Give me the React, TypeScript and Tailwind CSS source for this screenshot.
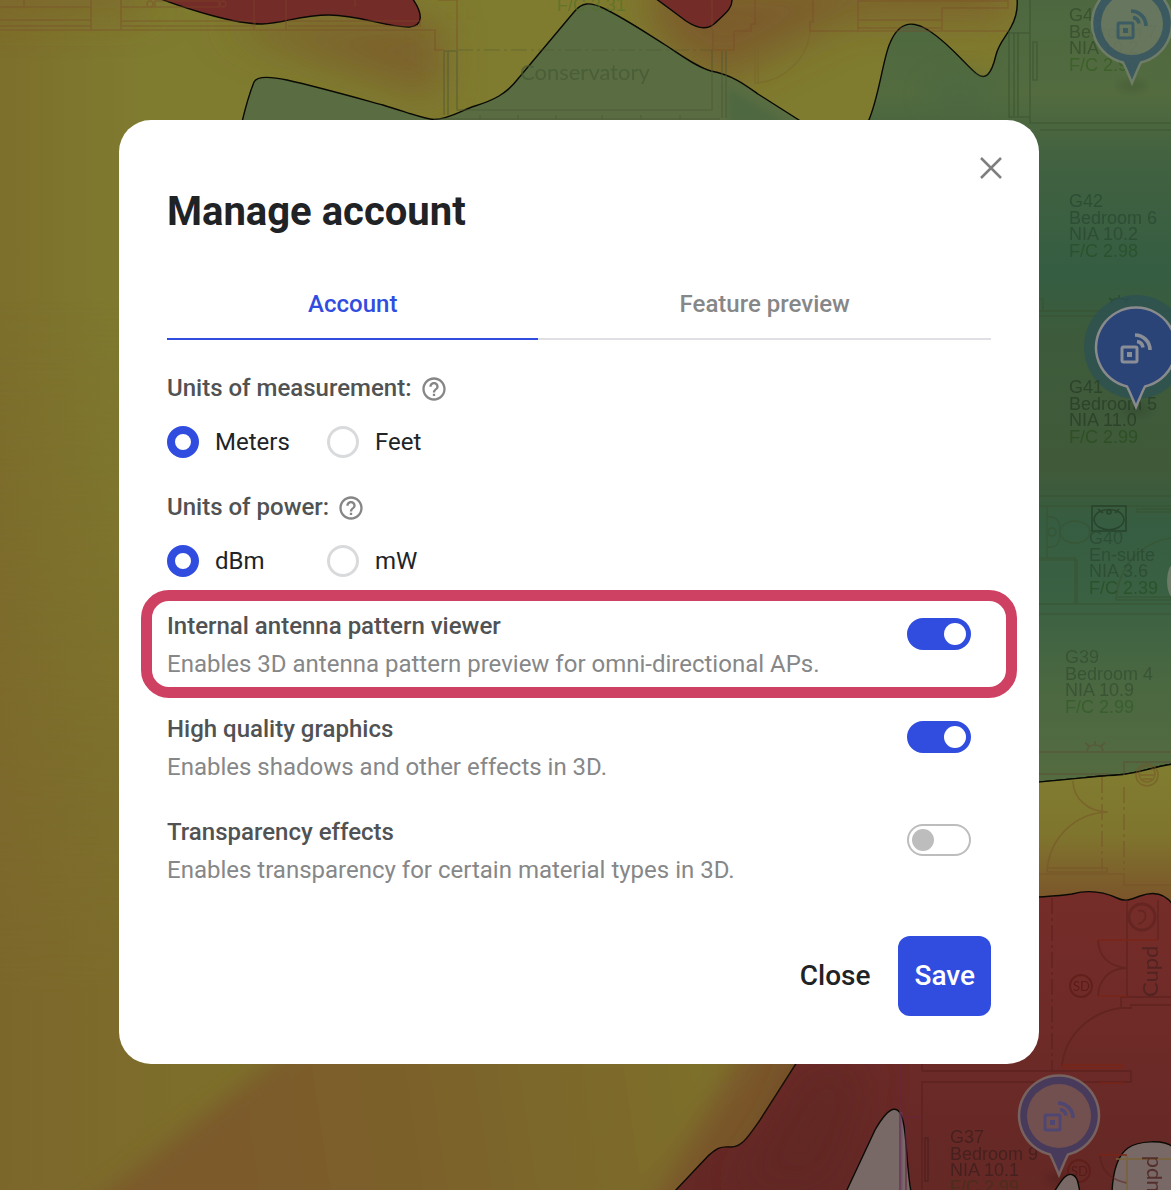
import { useState } from "react";
import { MdHelpOutline } from "react-icons/md";

type RoomProps = { x: number; y: number; lines: string[]; ink?: string; accent?: string };

function Room({ x, y, lines, ink = "#2d4d34", accent = "#2c5a2c" }: RoomProps) {
  return (
    <text x={x} y={y} fontSize="18" opacity="0.9" fontFamily="Liberation Sans, Arial, sans-serif">
      {lines.map((line, i) => (
        <tspan key={line} x={x} y={y + i * 16.6} fill={i === 3 ? accent : ink}>
          {line}
        </tspan>
      ))}
    </text>
  );
}

type PinProps = { x: number; y: number; ring: string; fill: string; edge: string; icon: string; r: number };

function Pin({ x, y, ring, fill, edge, icon, r }: PinProps) {
  return (
    <g transform={`translate(${x} ${y})`}>
      <ellipse cx="0" cy="62" rx="14" ry="5" fill="#000" opacity="0.12" filter="url(#soft)" />
      <path
        d="M-9 38.5A40 40 0 1 1 9 38.5C6 44 3 52 0 59C-3 52 -6 44 -9 38.5Z"
        fill={ring}
        stroke={edge}
        strokeWidth="2.5"
      />
      {r > 0 && <circle r={r} fill={fill} />}
      <g fill="none" stroke={icon} strokeWidth="3">
        <rect x="-14" y="-1" width="15" height="15" rx="1.5" />
        <path d="M-1 -13A15 15 0 0 1 14 2" strokeWidth="3.6" />
        <path d="M1 -6.500A7 7 0 0 1 7 -.5" strokeWidth="3.6" />
      </g>
      <rect x="-9" y="4" width="5" height="5" fill={icon} />
    </g>
  );
}

function HeatMap() {
  return (
    <svg
      className="absolute inset-0 h-full w-full"
      viewBox="0 0 1171 1190"
      preserveAspectRatio="xMidYMin slice"
      aria-hidden="true"
    >
      <defs>
        <filter id="soft" x="-50%" y="-50%" width="200%" height="200%">
          <feGaussianBlur stdDeviation="4" />
        </filter>
        <filter id="blend" x="-50%" y="-50%" width="200%" height="200%">
          <feGaussianBlur stdDeviation="11" />
        </filter>
        <filter id="haze" x="-80%" y="-80%" width="260%" height="260%">
          <feGaussianBlur stdDeviation="20" />
        </filter>
        <linearGradient id="field" x1="0" y1="0" x2="1" y2="0">
          <stop offset="0" stopColor="#7d6f2c" />
          <stop offset="0.13" stopColor="#7f7c30" />
          <stop offset="1" stopColor="#7f7b2f" />
        </linearGradient>
        <linearGradient id="lower" x1="0" y1="0" x2="1" y2="0">
          <stop offset="0" stopColor="#7c672b" />
          <stop offset="0.18" stopColor="#7d6f2b" />
          <stop offset="1" stopColor="#7d6f2b" />
        </linearGradient>
        <linearGradient id="fade" x1="0" y1="0" x2="0" y2="1">
          <stop offset="0" stopColor="#fff" stopOpacity="0" />
          <stop offset="1" stopColor="#fff" />
        </linearGradient>
        <mask id="lowerMask">
          <rect y="300" width="1171" height="700" fill="url(#fade)" />
          <rect y="1000" width="1171" height="190" fill="#fff" />
        </mask>
        <linearGradient id="brown" gradientUnits="userSpaceOnUse" x1="240" y1="1140" x2="700" y2="1070">
          <stop offset="0" stopColor="#7b5a29" />
          <stop offset="0.5" stopColor="#7c642b" />
          <stop offset="1" stopColor="#7d6f2b" />
        </linearGradient>
        <linearGradient id="east" gradientUnits="userSpaceOnUse" x1="0" y1="0" x2="0" y2="783">
          <stop offset="0" stopColor="#4d6840" />
          <stop offset="0.12" stopColor="#536b3f" />
          <stop offset="0.2" stopColor="#426240" />
          <stop offset="0.35" stopColor="#355d42" />
          <stop offset="0.43" stopColor="#3d5b3b" />
          <stop offset="0.6" stopColor="#405a39" />
          <stop offset="0.67" stopColor="#365d41" />
          <stop offset="0.77" stopColor="#3b6143" />
          <stop offset="0.87" stopColor="#4a6841" />
          <stop offset="1" stopColor="#556b40" />
        </linearGradient>
        <linearGradient id="amber" x1="0" y1="0" x2="0" y2="1">
          <stop offset="0" stopColor="#807d30" />
          <stop offset="0.5" stopColor="#7f752e" />
          <stop offset="1" stopColor="#7b522a" />
        </linearGradient>
        <linearGradient id="scarlet" gradientUnits="userSpaceOnUse" x1="0" y1="890" x2="0" y2="1190">
          <stop offset="0" stopColor="#762d29" />
          <stop offset="0.4" stopColor="#6f2b28" />
          <stop offset="1" stopColor="#642825" />
        </linearGradient>
      </defs>

      <rect width="1171" height="1190" fill="url(#field)" />
      <rect y="300" width="1171" height="890" fill="url(#lower)" mask="url(#lowerMask)" />
      <g filter="url(#blend)">
        <path d="M70 1220L300 1040H740L660 1220Z" fill="url(#brown)" />
        <path d="M640 1220L755 1030H830L700 1220Z" fill="#7a5829" />
      </g>
      <g filter="url(#haze)">
        <path d="M220 20H440V100L400 85L250 35Z" fill="#7b5529" opacity="0.7" />
        <path d="M640 -20H1010V15H850L720 80L665 45Z" fill="#7b5029" opacity="0.7" />
        <path d="M-20 -20H150V12H-20Z" fill="#7c5a2a" opacity="0.5" />
      </g>

      <g stroke="#0a0a05" strokeWidth="1.4">
        <path
          d="M158 -2C190 10 235 24 262 24C285 23 300 15 329 15C360 15 385 27 409 27C424 26 423 13 412 -2Z"
          fill="#742c28"
        />
        <path d="M655 -2L686 21C698 29 707 30 714 24C726 13 733 8 732 -2Z" fill="#742c28" />
        <path
          d="M242 122C247 101 250 92 254 82C257 76 268 76 287 80C318 87 350 96 383 105C412 114 424 119 434 119.500C450 119 462 110 475 106C494 100 506 94 517 80L574 12C582 2 590 2 603 8C626 19 646 33 667 46C682 56 697 67 711 71C732 75 744 84 758 94L802 122Z"
          fill="#5a6d42"
        />
        <path
          d="M868 122C879 98 883 58 890 43C900 19 915 21 931 32C952 46 968 68 977 74C985 80 991 76 996 55C999 43 1006 37 1011 27C1016 18 1018 8 1017 -2H1173V764C1148 768 1136 774 1117 775C1095 776 1070 780 1000 785V180H868Z"
          fill="url(#east)"
        />
        <path d="M1000 785C1070 780 1095 776 1117 775C1136 774 1148 768 1173 764V905H1000Z" fill="url(#amber)" />
        <path
          d="M820 1026L760 1120C748 1137 742 1147 731 1147C719 1146 716 1149 708 1156L674 1192H1173V905C1165 893 1154 891 1140 896C1130 900 1125 902 1117 898C1104 892 1090 889 1072 894C1058 896 1050 897 1000 899V1026Z"
          fill="url(#scarlet)"
        />
      </g>
      <path d="M780 1110L800 1064H870L860 1110L830 1190H730Z" fill="#5e2824" opacity="0.6" filter="url(#haze)" />
      <ellipse cx="960" cy="95" rx="35" ry="22" fill="#4b6742" opacity="0.6" filter="url(#blend)" />
      <path d="M728 88L792 125H728Z" fill="#476541" opacity="0.6" filter="url(#soft)" />

      <g stroke="#0a0a05" strokeWidth="1.4">
        <path d="M846 1192L875 1130C890 1104 900 1102 904 1126C907 1145 907 1170 911 1192Z" fill="#786866" />
        <path d="M1112 1192C1113 1170 1118 1155 1128 1148C1138 1141 1163 1139 1173 1147V1192Z" fill="#786866" />
      </g>

      <g fill="none" stroke="#7d492a" strokeWidth="1.6" opacity="0.4">
        <path d="M0 7H91M0 20H91M0 30H435V50H444M91 0V30M121 0V30M121 7H155M0 26H91M122 21H255V26H122M288 21H420V26H288M24 0V7M254 0V30M286 0V30M355 0V7M457 0V50M438 0H457" />
        <path d="M155 1H219V7H155Z" />
        <circle cx="150" cy="4" r="3" />
        <circle cx="223" cy="4" r="3" />
        <path d="M713 30V50H734V31H751V24H755V0M712 0V30M813 0V22H810V31H1008M858 0V30M858 20H942V28H858M942 8V30M942 8H1008V0M858 1H1008" />
      </g>
      <g fill="none" stroke="#4c5733" strokeWidth="1.6" opacity="0.5">
        <path d="M444 51V115M448 51V115M457 51V110H712V50M444 51H457M722 51V118M726 51V118M434 119H720M480 115V120M518 115V120M556 115V120M602 115V120M641 115V120M680 115V120" />
        <path d="M457 50H712" strokeDasharray="16 4 3 4" opacity="0.6" />
        <path d="M755 28V83H758V28M810 31C808 58 785 80 758 83" stroke="#7a652b" />
      </g>
      <g fill="none" stroke="#38512f" strokeWidth="1.6" opacity="0.5">
        <path d="M1009 30V118M1014 32V116M1018 32V116M1030 0V123H1171M1040 130H1171M1009 33H1030M1009 117H1030M1033 42H1037V80H1033Z" />
        <path d="M1039 311H1171M1039 316H1171M1039 299H1043V311M1039 496H1171M1039 506H1171M1047 507V558M1039 560H1077V604M1039 558H1075V604H1039M1039 614H1171M1039 604H1171M1137 509H1171V512H1137ZM1116 597H1171V600H1116Z" />
        <path d="M1047 517C1058 516 1060 522 1060 532C1060 542 1058 548 1047 547" />
        <circle cx="1052" cy="532" r="4" />
        <ellipse cx="1075" cy="532" rx="15" ry="11" />
        <path d="M1116 597C1120 565 1140 543 1171 538" />
      </g>
      <g fill="none" stroke="#253f28" strokeWidth="1.6" opacity="0.8">
        <rect x="1092" y="506" width="34" height="25" />
        <path d="M1094 520C1094 506 1124 506 1124 520C1122 533 1096 533 1094 520ZM1098 509L1103 513M1119 509L1115 513" />
        <circle cx="1109" cy="512" r="2" />
      </g>
      <g fill="none" stroke="#5b4e35" strokeWidth="1.6" opacity="0.6">
        <path d="M1039 752H1171M1039 774H1110M1087 751C1088 743 1102 743 1103 751M1089 746L1085 743M1095 744V741M1101 746L1105 743M1124 775V762H1171" />
        <path d="M1111 303C1112 297 1126 297 1127 303M1113 301L1109 298M1119 298V295M1125 301L1129 298" stroke="#28422b" />
      </g>
      <g fill="none" stroke="#775228" strokeWidth="1.6" opacity="0.5">
        <circle cx="1147" cy="775" r="11" />
        <circle cx="1147" cy="774" r="8" />
        <path d="M1139 775H1155M1142 779H1152" />
        <path d="M1102 777V870M1124 787V870" strokeDasharray="16 4 3 4" />
        <path d="M1073 781C1073 798 1088 812 1108 812M1108 812C1075 813 1049 838 1047 872M1047 868H1107V872H1047M1039 874H1124V885H1171" />
      </g>
      <g fill="none" stroke="#571f1b" strokeWidth="1.8" opacity="0.5">
        <path d="M1052 898V1070" strokeDasharray="16 4 3 4" />
        <path d="M1127 900V997M1158 900V940M1098 940C1099 958 1110 966 1126 968M1126 968C1110 969 1099 978 1098 996M1121 997H1171M1121 997V1008H1131V1005H1171M1121 1008C1090 1012 1065 1035 1062 1066M922 1071H1131V1082H922V1190M922 1071V1064M1100 1155C1101 1172 1112 1180 1127 1183" />
        <circle cx="1142" cy="917" r="13" strokeWidth="3" />
        <path d="M1138 911C1148 908 1148 922 1138 924" />
      </g>
      <g fill="none" stroke="#5c1c16" strokeWidth="2" opacity="0.7">
        <circle cx="1081" cy="986" r="11" />
        <circle cx="1079" cy="1171" r="11" />
        <path d="M1098 940H1158M1098 996H1127M1062 1065H1122V1068H1062M1100 1083H1124M1100 1155H1127" stroke="#7b2416" />
      </g>
      <path d="M900 1064V1190M904 1117H922M906 1120V1190" stroke="#6c2340" strokeWidth="1.6" fill="none" opacity="0.7" />
      <path d="M901 1112V1190" stroke="#69446f" strokeWidth="3" opacity="0.5" />
      <path d="M925 1138H928V1181H925Z" stroke="#4d201e" strokeWidth="1.5" fill="none" opacity="0.8" />
      <path d="M1116 1159H1171M1127 1156V1190" stroke="#786335" strokeWidth="2" opacity="0.7" />

      <g fontFamily="Lato, sans-serif" fill="#435833">
        <text x="520" y="80" fontSize="22" opacity="0.65">
          Conservatory
        </text>
        <text x="557" y="11" fontSize="18" fontFamily="Liberation Sans, sans-serif" fill="#50702a" opacity="0.6">
          F/C 3.31
        </text>
      </g>
      <g fontFamily="Lato, sans-serif" fill="#4b2220" opacity="0.8">
        <text fontSize="22" transform="translate(1158 997) rotate(-90)">
          Cupd
        </text>
        <text fontSize="22" transform="translate(1158 1207) rotate(-90)">
          Cupd
        </text>
        <text x="1073" y="991" fontSize="13" fill="#551a15">
          SD
        </text>
        <text x="1071" y="1176" fontSize="13" fill="#551a15">
          SD
        </text>
      </g>

      <circle cx="1136" cy="347" r="52" fill="#2c5055" opacity="0.7" />
      <Room x={1069} y={21} lines={["G43", "Bedroom 7", "NIA 10.2", "F/C 2.98"]} ink="#3a5030" accent="#3a6128" />
      <Room x={1069} y={207} lines={["G42", "Bedroom 6", "NIA 10.2", "F/C 2.98"]} accent="#2a522c" />
      <Room x={1069} y={393} lines={["G41", "Bedroom 5", "NIA 11.0", "F/C 2.99"]} ink="#2c422b" accent="#2e4f24" />
      <Room x={1089} y={544} lines={["G40", "En-suite", "NIA 3.6", "F/C 2.39"]} accent="#2a522a" />
      <Room x={1065} y={663} lines={["G39", "Bedroom 4", "NIA 10.9", "F/C 2.99"]} ink="#385334" accent="#375f2c" />
      <Room
        x={950}
        y={1143}
        lines={["G37", "Bedroom 9", "NIA 10.1", "F/C 2.99"]}
        ink="#43201e"
        accent="#4a2f1c"
      />

      <g opacity="0.88">
        <Pin x={1132} y={24} r={31} ring="#3a5765" fill="#6b7862" edge="#74806e" icon="#3b5a68" />
      </g>
      <Pin x={1136} y={348} r={0} ring="#2b4478" fill="#2b4478" edge="#888a8b" icon="#8a8e96" />
      <Pin x={1059} y={1116} r={32} ring="#483a5b" fill="#735050" edge="#78625f" icon="#504672" />
      <path
        d="M1054 1192C1062 1179 1067 1172 1073 1175C1078 1177 1078 1184 1080 1192Z"
        fill="#786866"
        stroke="#0a0a05"
        strokeWidth="1.4"
      />
      <ellipse cx="1174" cy="581" rx="7" ry="17" fill="#6d7b69" />
    </svg>
  );
}

type UnitsProps = { name: string; label: string; options: string[] };

function UnitsField({ name, label, options }: UnitsProps) {
  const [value, setValue] = useState(options[0]);
  return (
    <fieldset>
      <legend className="flex h-8 items-center gap-2 font-medium text-[#505253]">
        {label}
        <button type="button" aria-label={`About ${label}`} className="mt-0.5 text-[#868686]">
          <MdHelpOutline className="size-7" />
        </button>
      </legend>
      <div className="mt-[22px] flex">
        {options.map((option) => (
          <label key={option} className="flex h-8 w-40 items-center gap-4 text-[#212427]">
            <input
              type="radio"
              name={name}
              checked={value === option}
              onChange={() => setValue(option)}
              className="size-8 shrink-0 appearance-none rounded-full border-[3px] border-[#d9dadc] checked:border-8 checked:border-[#304ddf]"
            />
            {option}
          </label>
        ))}
      </div>
    </fieldset>
  );
}

type ToggleProps = { id: string; title: string; text: string; on?: boolean; highlighted?: boolean };

function ToggleRow({ id, title, text, on = false, highlighted = false }: ToggleProps) {
  const [checked, setChecked] = useState(on);
  return (
    <div className="relative flex items-start justify-between gap-6 pr-5">
      {highlighted && (
        <div className="pointer-events-none absolute -inset-x-[26px] -top-5 -bottom-[18px] rounded-[28px] border-[11px] border-[#cf4162]" />
      )}
      <div>
        <label htmlFor={id} className="block font-medium text-[#505253]">
          {title}
        </label>
        <p id={`${id}-text`} className="mt-1.5 text-[#868788]">
          {text}
        </p>
      </div>
      <input
        id={id}
        type="checkbox"
        role="switch"
        aria-describedby={`${id}-text`}
        checked={checked}
        onChange={(e) => setChecked(e.target.checked)}
        className="mt-2 flex h-8 w-16 shrink-0 appearance-none items-center rounded-full border-2 border-[#bdbdbd] px-[3px] before:size-[22px] before:rounded-full before:bg-[#bdbdbd] checked:justify-end checked:border-[#304ddf] checked:bg-[#304ddf] checked:before:bg-white"
      />
    </div>
  );
}

export default function App() {
  const [tab, setTab] = useState("Account");
  return (
    <main className="relative flex min-h-screen items-start justify-center overflow-hidden bg-[#7f782e] pt-[120px] pr-[13px] pb-[120px] font-['Roboto',sans-serif] text-2xl leading-8">
      <HeatMap />
      <section
        role="dialog"
        aria-labelledby="dialog-title"
        className="relative w-full max-w-[920px] rounded-[32px] bg-white p-12"
      >
        <button type="button" aria-label="Close dialog" className="absolute top-8 right-8 p-1 text-[#7f7f7f]">
          <svg viewBox="0 0 24 24" className="size-6" fill="none" stroke="currentColor" strokeWidth="2.5">
            <path d="M2 2L22 22M22 2L2 22" />
          </svg>
        </button>
        <h1 id="dialog-title" className="pt-5 text-[40px] leading-12 font-bold text-[#1f2326]">
          Manage account
        </h1>

        <div role="tablist" className="mt-8 flex">
          {["Account", "Feature preview"].map((name) => (
            <button
              key={name}
              type="button"
              role="tab"
              aria-selected={tab === name}
              onClick={() => setTab(name)}
              className="h-[72px] flex-auto border-b-2 border-[#dee0e4] pt-0.5 font-medium text-[#868788] aria-selected:border-[#304ddf] aria-selected:text-[#304ddf]"
            >
              {name}
            </button>
          ))}
        </div>

        <form className="mt-8 flex flex-col gap-[33px]" onSubmit={(e) => e.preventDefault()}>
          <UnitsField name="length" label="Units of measurement:" options={["Meters", "Feet"]} />
          <UnitsField name="power" label="Units of power:" options={["dBm", "mW"]} />
          <ToggleRow
            id="antenna"
            title="Internal antenna pattern viewer"
            text="Enables 3D antenna pattern preview for omni-directional APs."
            on
            highlighted
          />
          <ToggleRow
            id="graphics"
            title="High quality graphics"
            text="Enables shadows and other effects in 3D."
            on
          />
          <ToggleRow
            id="transparency"
            title="Transparency effects"
            text="Enables transparency for certain material types in 3D."
          />
          <div className="mt-[17px] flex justify-end gap-3 text-[28px] font-medium">
            <button type="button" className="h-20 px-4 text-[#1f2326]">
              Close
            </button>
            <button type="submit" className="h-20 rounded-xl bg-[#304ddf] px-4 text-white">
              Save
            </button>
          </div>
        </form>
      </section>
    </main>
  );
}
